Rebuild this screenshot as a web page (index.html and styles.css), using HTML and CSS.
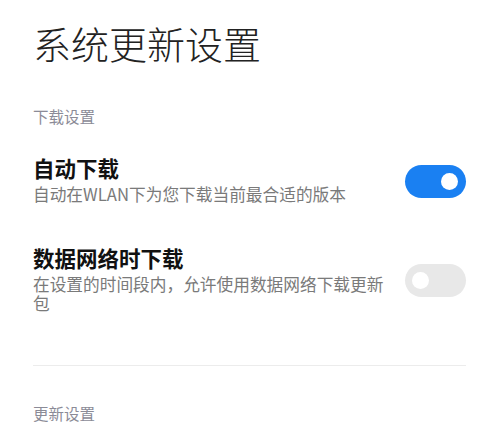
FILE: index.html
```html
<!DOCTYPE html>
<html lang="zh-CN">
<head>
<meta charset="utf-8">
<title>系统更新设置</title>
<link rel="stylesheet" href="styles.css">
</head>
<body>
<main class="page">
  <h1 class="page-title">系统更新设置</h1>

  <section class="group">
    <h2 class="group-title">下载设置</h2>
    <div class="row">
      <div class="row-text">
        <div class="row-title">自动下载</div>
        <div class="row-desc">自动在WLAN下为您下载当前最合适的版本</div>
      </div>
      <div class="switch switch-on"><span class="knob"></span></div>
    </div>
    <div class="row">
      <div class="row-text">
        <div class="row-title">数据网络时下载</div>
        <div class="row-desc">在设置的时间段内，允许使用数据网络下载更新包</div>
      </div>
      <div class="switch switch-off"><span class="knob"></span></div>
    </div>
  </section>

  <hr class="divider">

  <section class="group">
    <h2 class="group-title">更新设置</h2>
  </section>
</main>
</body>
</html>
```

FILE: styles.css
```css
html, body {
  margin: 0;
  padding: 0;
  background: #ffffff;
}

body {
  font-family: "Noto Sans CJK SC", "Noto Sans", sans-serif;
  overflow: hidden;
}

.page {
  padding: 20px 34px 0 33px;
}

.page-title {
  margin: 0;
  font-size: 38px;
  line-height: 46px;
  font-weight: 300;
  color: #222222;
}

.group-title {
  margin: 40px 0 8px;
  font-size: 15.5px;
  line-height: 20px;
  font-weight: 400;
  color: #8b8b97;
}

.row {
  display: flex;
  align-items: center;
  justify-content: space-between;
  gap: 18px;
  padding: 20px 0;
}

.row-text {
  flex: 1;
  min-width: 0;
}

.row-title {
  font-size: 21.5px;
  line-height: 28px;
  font-weight: 700;
  color: #111111;
}

.row-desc {
  margin-top: 3px;
  font-size: 16.7px;
  line-height: 19px;
  color: #7a7a7a;
}

.switch {
  flex: none;
  width: 61px;
  height: 33px;
  margin-top: 4px;
  border-radius: 17px;
  display: flex;
  align-items: center;
  padding: 0 8px 0 7px;
  box-sizing: border-box;
}

.switch-on {
  background: #1a80f2;
  justify-content: flex-end;
}

.switch-off {
  background: #e8e8e8;
  justify-content: flex-start;
}

.knob {
  width: 17px;
  height: 17px;
  border-radius: 50%;
  background: #ffffff;
}

.divider {
  margin: 32px 0 0;
  border: 0;
  height: 1px;
  background: #ececec;
}

.divider + .group .group-title {
  margin-top: 37px;
}
```
